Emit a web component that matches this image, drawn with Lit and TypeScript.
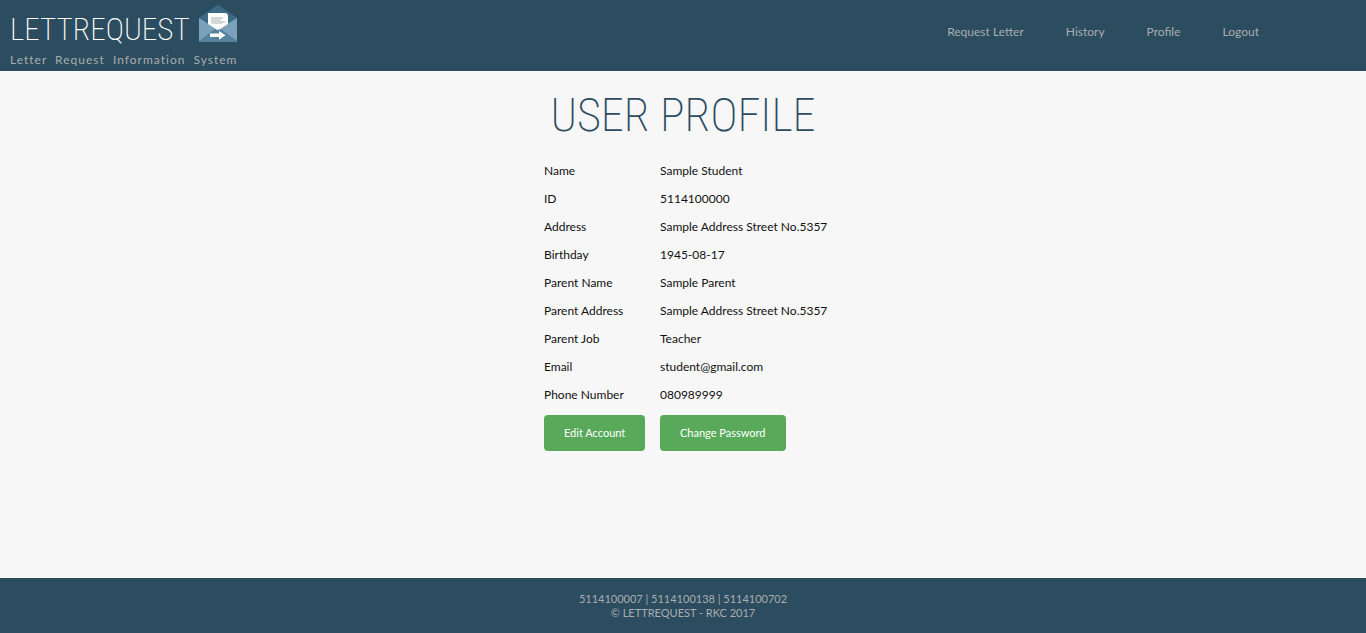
import { LitElement, html, css } from "lit";
import { customElement, state } from "lit/decorators.js";

@customElement("app-root")
export class AppRoot extends LitElement {
  static styles = css`
    :host {
      display: flex;
      flex-direction: column;
      min-height: 100vh;
      background: #f7f7f7;
      color: #111;
      font: 12px/20px Lato, "Open Sans", sans-serif;
    }
    .header {
      display: flex;
      justify-content: space-between;
      align-items: flex-start;
      background: #2c4c5f;
      color: #aaadaf;
    }
    .brand {
      padding: 5px 10px 1px;
      color: inherit;
      text-decoration: none;
    }
    .brand-row {
      display: flex;
      justify-content: space-between;
      height: 45px;
    }
    .brand-name {
      color: #fff;
      font-family: "Roboto Condensed", Roboto, sans-serif;
      font-size: 31px;
      font-weight: 200;
      line-height: 50px;
    }
    .logo {
      width: 38px;
      height: 38px;
    }
    .tagline {
      display: block;
      letter-spacing: 1px;
      word-spacing: 4px;
    }
    .nav {
      display: flex;
      gap: 42px;
      padding: 22px 107px 0 0;
    }
    .nav a {
      color: inherit;
      text-decoration: none;
    }
    .main {
      flex: 1;
      display: flex;
      flex-direction: column;
      align-items: center;
    }
    .title {
      margin: 14px 0 12px;
      color: #2c4c5f;
      font-family: "Roboto Condensed", Roboto, sans-serif;
      font-size: 46px;
      font-weight: 200;
      line-height: 60px;
      text-transform: uppercase;
    }
    .profile {
      width: 278px;
      table-layout: fixed;
      border-collapse: collapse;
      white-space: nowrap;
    }
    .profile th,
    .profile td {
      padding: 4px 0;
      text-align: left;
      font-weight: 400;
    }
    .profile th {
      width: 116px;
    }
    .profile .actions {
      padding-top: 6px;
    }
    .button {
      display: block;
      height: 36px;
      padding: 0 20px;
      border: 0;
      border-radius: 4px;
      background: #58aa5a;
      color: #fff;
      font: 11px/36px Lato, "Open Sans", sans-serif;
      cursor: pointer;
    }
    .footer {
      padding: 14px 0 13px;
      background: #2c4c5f;
      color: #aaadaf;
      text-align: center;
      font-size: 11px;
      line-height: 14px;
    }
    .footer p {
      margin: 0;
    }
  `;

  @state() private links = ["Request Letter", "History", "Profile", "Logout"];

  @state() private fields = [
    ["Name", "Sample Student"],
    ["ID", "5114100000"],
    ["Address", "Sample Address Street No.5357"],
    ["Birthday", "1945-08-17"],
    ["Parent Name", "Sample Parent"],
    ["Parent Address", "Sample Address Street No.5357"],
    ["Parent Job", "Teacher"],
    ["Email", "student@gmail.com"],
    ["Phone Number", "080989999"],
  ];

  render() {
    return html`
      <header class="header">
        <a class="brand" href="#">
          <span class="brand-row">
            <span class="brand-name">LETTREQUEST</span>
            <svg class="logo" viewBox="0 0 38 38" aria-hidden="true">
              <path fill="#3c6a86" d="M0 13 17 1q2-1.500 4 0l17 12v10H0z" />
              <path fill="#7ba2ba" d="M0 13 19 25 38 13v23q0 1-1 1H1q-1 0-1-1z" />
              <path fill="#55839d" d="M0 36 16 24q3-2 6 0l16 12q0 1-1 1H1q-1 0-1-1z" />
              <path fill="#fff" d="M9 8h18l2 2v9l-8 5.200q-2 1-4 0L9 19z" />
              <path fill="#d5d7d9" d="M12 12h12v2h-2v2h4v2h-3v1H13l-1-1z" />
              <path fill="#fff" d="M11 28.500h9V26l6.500 4.300-6.500 4.400v-2.700h-9z" />
            </svg>
          </span>
          <span class="tagline">Letter Request Information System</span>
        </a>
        <nav class="nav">
          ${this.links.map((name) => html`<a href="#">${name}</a>`)}
        </nav>
      </header>
      <main class="main">
        <h1 class="title">User Profile</h1>
        <table class="profile">
          <tbody>
            ${this.fields.map(
              ([label, value]) => html`<tr><th scope="row">${label}</th><td>${value}</td></tr>`
            )}
            <tr>
              <td class="actions"><button class="button" type="button">Edit Account</button></td>
              <td class="actions"><button class="button" type="button">Change Password</button></td>
            </tr>
          </tbody>
        </table>
      </main>
      <footer class="footer">
        <p>5114100007 | 5114100138 | 5114100702</p>
        <p>© LETTREQUEST - RKC 2017</p>
      </footer>
    `;
  }
}
